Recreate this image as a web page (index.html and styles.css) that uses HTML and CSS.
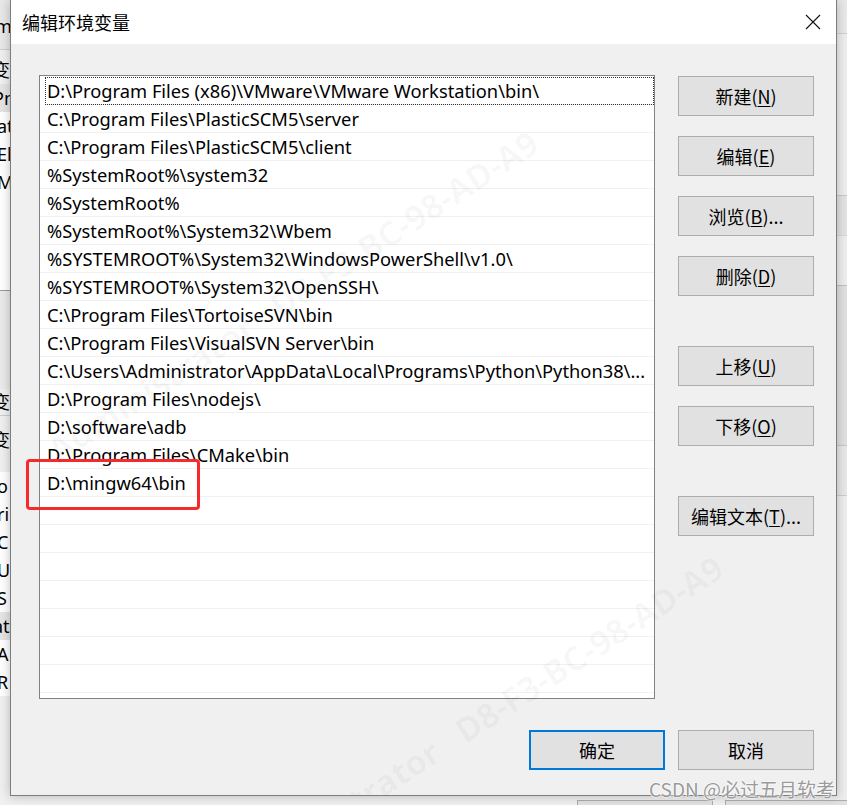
FILE: index.html
```html
<!DOCTYPE html>
<html lang="zh-CN">
<head>
<meta charset="utf-8">
<title>编辑环境变量</title>
<link rel="stylesheet" href="styles.css">
</head>
<body>
<div class="desktop">
  <div class="bgwin bgwin-left">
    <div class="bg-top">m</div>
    <div class="bg-row bg-head">变量</div>
    <div class="bg-row bg-sel">Pn</div>
    <div class="bg-row">at</div>
    <div class="bg-row">El</div>
    <div class="bg-row">M</div>
    <div class="bg-fill"></div>
    <div class="bg-gap"></div>
    <div class="bg-row bg-head">变</div>
    <div class="bg-row bg-head2">变量</div>
    <div class="bg-row">o</div>
    <div class="bg-row">ri</div>
    <div class="bg-row">C</div>
    <div class="bg-row">U</div>
    <div class="bg-row">S</div>
    <div class="bg-row bg-sel">at</div>
    <div class="bg-row">A</div>
    <div class="bg-row">R</div>
  </div>
  <div class="bgwin bgwin-right"></div>
  <div class="bgbtn bgbtn1"></div>
  <div class="bgbtn bgbtn2"></div>
</div>

<div class="dialog">
  <div class="titlebar">
    <span class="title">编辑环境变量</span>
    <svg class="close" width="16" height="16" viewBox="0 0 16 16"><path d="M1 1L15 15M15 1L1 15" stroke="#111" stroke-width="1.1" fill="none"/></svg>
  </div>
  <div class="content">
    <div class="main">
      <div class="listbox">
        <div class="row focus">D:\Program Files (x86)\VMware\VMware Workstation\bin\</div>
        <div class="row">C:\Program Files\PlasticSCM5\server</div>
        <div class="row">C:\Program Files\PlasticSCM5\client</div>
        <div class="row">%SystemRoot%\system32</div>
        <div class="row">%SystemRoot%</div>
        <div class="row">%SystemRoot%\System32\Wbem</div>
        <div class="row">%SYSTEMROOT%\System32\WindowsPowerShell\v1.0\</div>
        <div class="row">%SYSTEMROOT%\System32\OpenSSH\</div>
        <div class="row">C:\Program Files\TortoiseSVN\bin</div>
        <div class="row">C:\Program Files\VisualSVN Server\bin</div>
        <div class="row">C:\Users\Administrator\AppData\Local\Programs\Python\Python38\...</div>
        <div class="row">D:\Program Files\nodejs\</div>
        <div class="row">D:\software\adb</div>
        <div class="row">D:\Program Files\CMake\bin</div>
        <div class="row">D:\mingw64\bin</div>
        <div class="row"></div>
        <div class="row"></div>
        <div class="row"></div>
        <div class="row"></div>
        <div class="row"></div>
        <div class="row"></div>
        <div class="row"></div>
        <div class="row"></div>
      </div>
      <div class="side">
        <div class="group">
          <button class="btn">新建(<u>N</u>)</button>
          <button class="btn">编辑(<u>E</u>)</button>
          <button class="btn">浏览(<u>B</u>)...</button>
          <button class="btn">删除(<u>D</u>)</button>
        </div>
        <div class="group">
          <button class="btn">上移(<u>U</u>)</button>
          <button class="btn">下移(<u>O</u>)</button>
        </div>
        <div class="group">
          <button class="btn">编辑文本(<u>T</u>)...</button>
        </div>
      </div>
    </div>
    <div class="footer">
      <button class="btn default">确定</button>
      <button class="btn">取消</button>
    </div>
  </div>
  <div class="highlight"></div>
  <div class="wm wm1">Administrator&nbsp;&nbsp;&nbsp;D8-F3-BC-98-AD-A9</div>
  <div class="wm wm2">Administrator&nbsp;&nbsp;&nbsp;D8-F3-BC-98-AD-A9</div>
</div>
<div class="csdn">CSDN @必过五月软考</div>
</body>
</html>
```
FILE: styles.css
```css
* { box-sizing: border-box; }
html, body {
  margin: 0;
  padding: 0;
  width: 847px;
  height: 805px;
  overflow: hidden;
}
body {
  position: relative;
  background: #f0f0f0;
  font-family: "Noto Sans", "Noto Sans CJK SC", sans-serif;
  color: #000;
}
.desktop {
  position: absolute;
  inset: 0;
}
.bgwin {
  position: absolute;
  top: 0;
}
.bgwin-left {
  left: 0;
  width: 12px;
  height: 805px;
  background: #f0f0f0;
  font-size: 18px;
  line-height: 28px;
  overflow: hidden;
  white-space: nowrap;
}
.bg-top {
  height: 50px;
  line-height: 52px;
  background: #e8e8e8;
  text-indent: -5px;
  border-bottom: 1px solid #d0d0d0;
}
.bg-row {
  height: 28px;
  background: #fff;
  text-indent: -3px;
}
.bg-row.bg-head { height: 34px; line-height: 40px; background: #f0f0f0; text-indent: -8px; }
.bg-row.bg-head2 { height: 57px; line-height: 48px; background: #f0f0f0; text-indent: -8px; border-top: 1px solid #ccc; }
.bg-gap + .bg-row.bg-head { height: 26px; line-height: 26px; }
.bg-row.bg-sel { background: #e5e5e5; text-indent: -7px; }
.bg-fill { height: 94px; background: #fff; }
.bg-gap { height: 99px; background: #eaeaea; border-top: 1px solid #999; }
.bgwin-right {
  right: 0;
  width: 12px;
  height: 805px;
  background: linear-gradient(#e9e9e9 0 33px, #d0d0d0 33px 34px, #eee 34px 195px, #c9c9c9 195px 196px, #e3e3e3 196px 235px, #d6d6d6 235px 236px, #eee 236px 285px, #c0c0c0 285px 286px, #e0e0e0 286px 445px, #c9c9c9 445px 446px, #e8e8e8 446px 495px, #cfcfcf 495px 496px, #eee 496px);
}
.bgbtn {
  position: absolute;
  top: 800px;
  height: 20px;
  background: #e1e1e1;
  border: 1px solid #adadad;
}
.bgbtn1 { left: 577px; width: 136px; }
.bgbtn2 { left: 725px; width: 136px; }
.dialog {
  position: absolute;
  left: 10px;
  top: 0;
  width: 827px;
  height: 796px;
  background: #f0f0f0;
  border: 1px solid #7d7d7d;
  border-top: none;
  box-shadow: 0 0 10px rgba(0,0,0,0.25);
  overflow: hidden;
  z-index: 1;
}
.titlebar {
  height: 44px;
  background: #fff;
  display: flex;
  align-items: center;
  justify-content: space-between;
  padding: 0 15px 0 11px;
}
.title {
  font-size: 18px;
  color: #000;
}
.close { display: block; }
.content {
  padding: 31px 22px 0 28px;
  display: flex;
  flex-direction: column;
}
.main {
  display: flex;
  gap: 23px;
  height: 624px;
}
.listbox {
  position: relative;
  width: 617px;
  height: 624px;
  background: #fff;
  border: 1px solid #828282;
  overflow: hidden;
  padding-top: 1px;
}
.row {
  height: 28px;
  line-height: 27px;
  border-bottom: 1px solid #f0f0f0;
  padding-left: 7px;
  font-size: 18.3px;
  white-space: nowrap;
  overflow: hidden;
}
.row.focus {
  outline: 1px dotted #333;
  outline-offset: -1px;
  margin-left: 5px;
  padding-left: 2px;
}
.highlight {
  position: absolute;
  left: 15px;
  top: 459px;
  width: 174px;
  height: 51px;
  border: 3px solid #f62a2a;
  border-radius: 4px;
  z-index: 2;
}
.side {
  display: flex;
  flex-direction: column;
  gap: 50px;
  padding-top: 1px;
}
.group {
  display: flex;
  flex-direction: column;
  gap: 20px;
}
.btn {
  width: 136px;
  height: 40px;
  background: #e1e1e1;
  border: 1px solid #adadad;
  font-family: "Noto Sans CJK SC", "Noto Sans", sans-serif;
  font-size: 18px;
  color: #000;
  padding: 0;
  margin: 0;
}
.btn u { text-underline-offset: 2px; }
.btn.default {
  border: 2px solid #0078d7;
}
.footer {
  display: flex;
  justify-content: flex-end;
  gap: 13px;
  margin-top: 31px;
}
.wm {
  position: absolute;
  font-size: 34px;
  font-weight: bold;
  color: rgba(0,0,0,0.03);
  white-space: nowrap;
  transform: rotate(-33deg);
  transform-origin: left center;
  pointer-events: none;
  z-index: 3;
}
.wm1 { left: 40px; top: 430px; }
.wm2 { left: 225px; top: 855px; }
.csdn {
  position: absolute;
  right: 12px;
  bottom: 3px;
  font-family: "Noto Sans CJK SC", sans-serif;
  font-size: 19px;
  color: #9a9a9a;
  text-shadow: 0 0 2px #fff, 0 0 2px #fff, 0 0 1px #fff;
  z-index: 5;
}
```
